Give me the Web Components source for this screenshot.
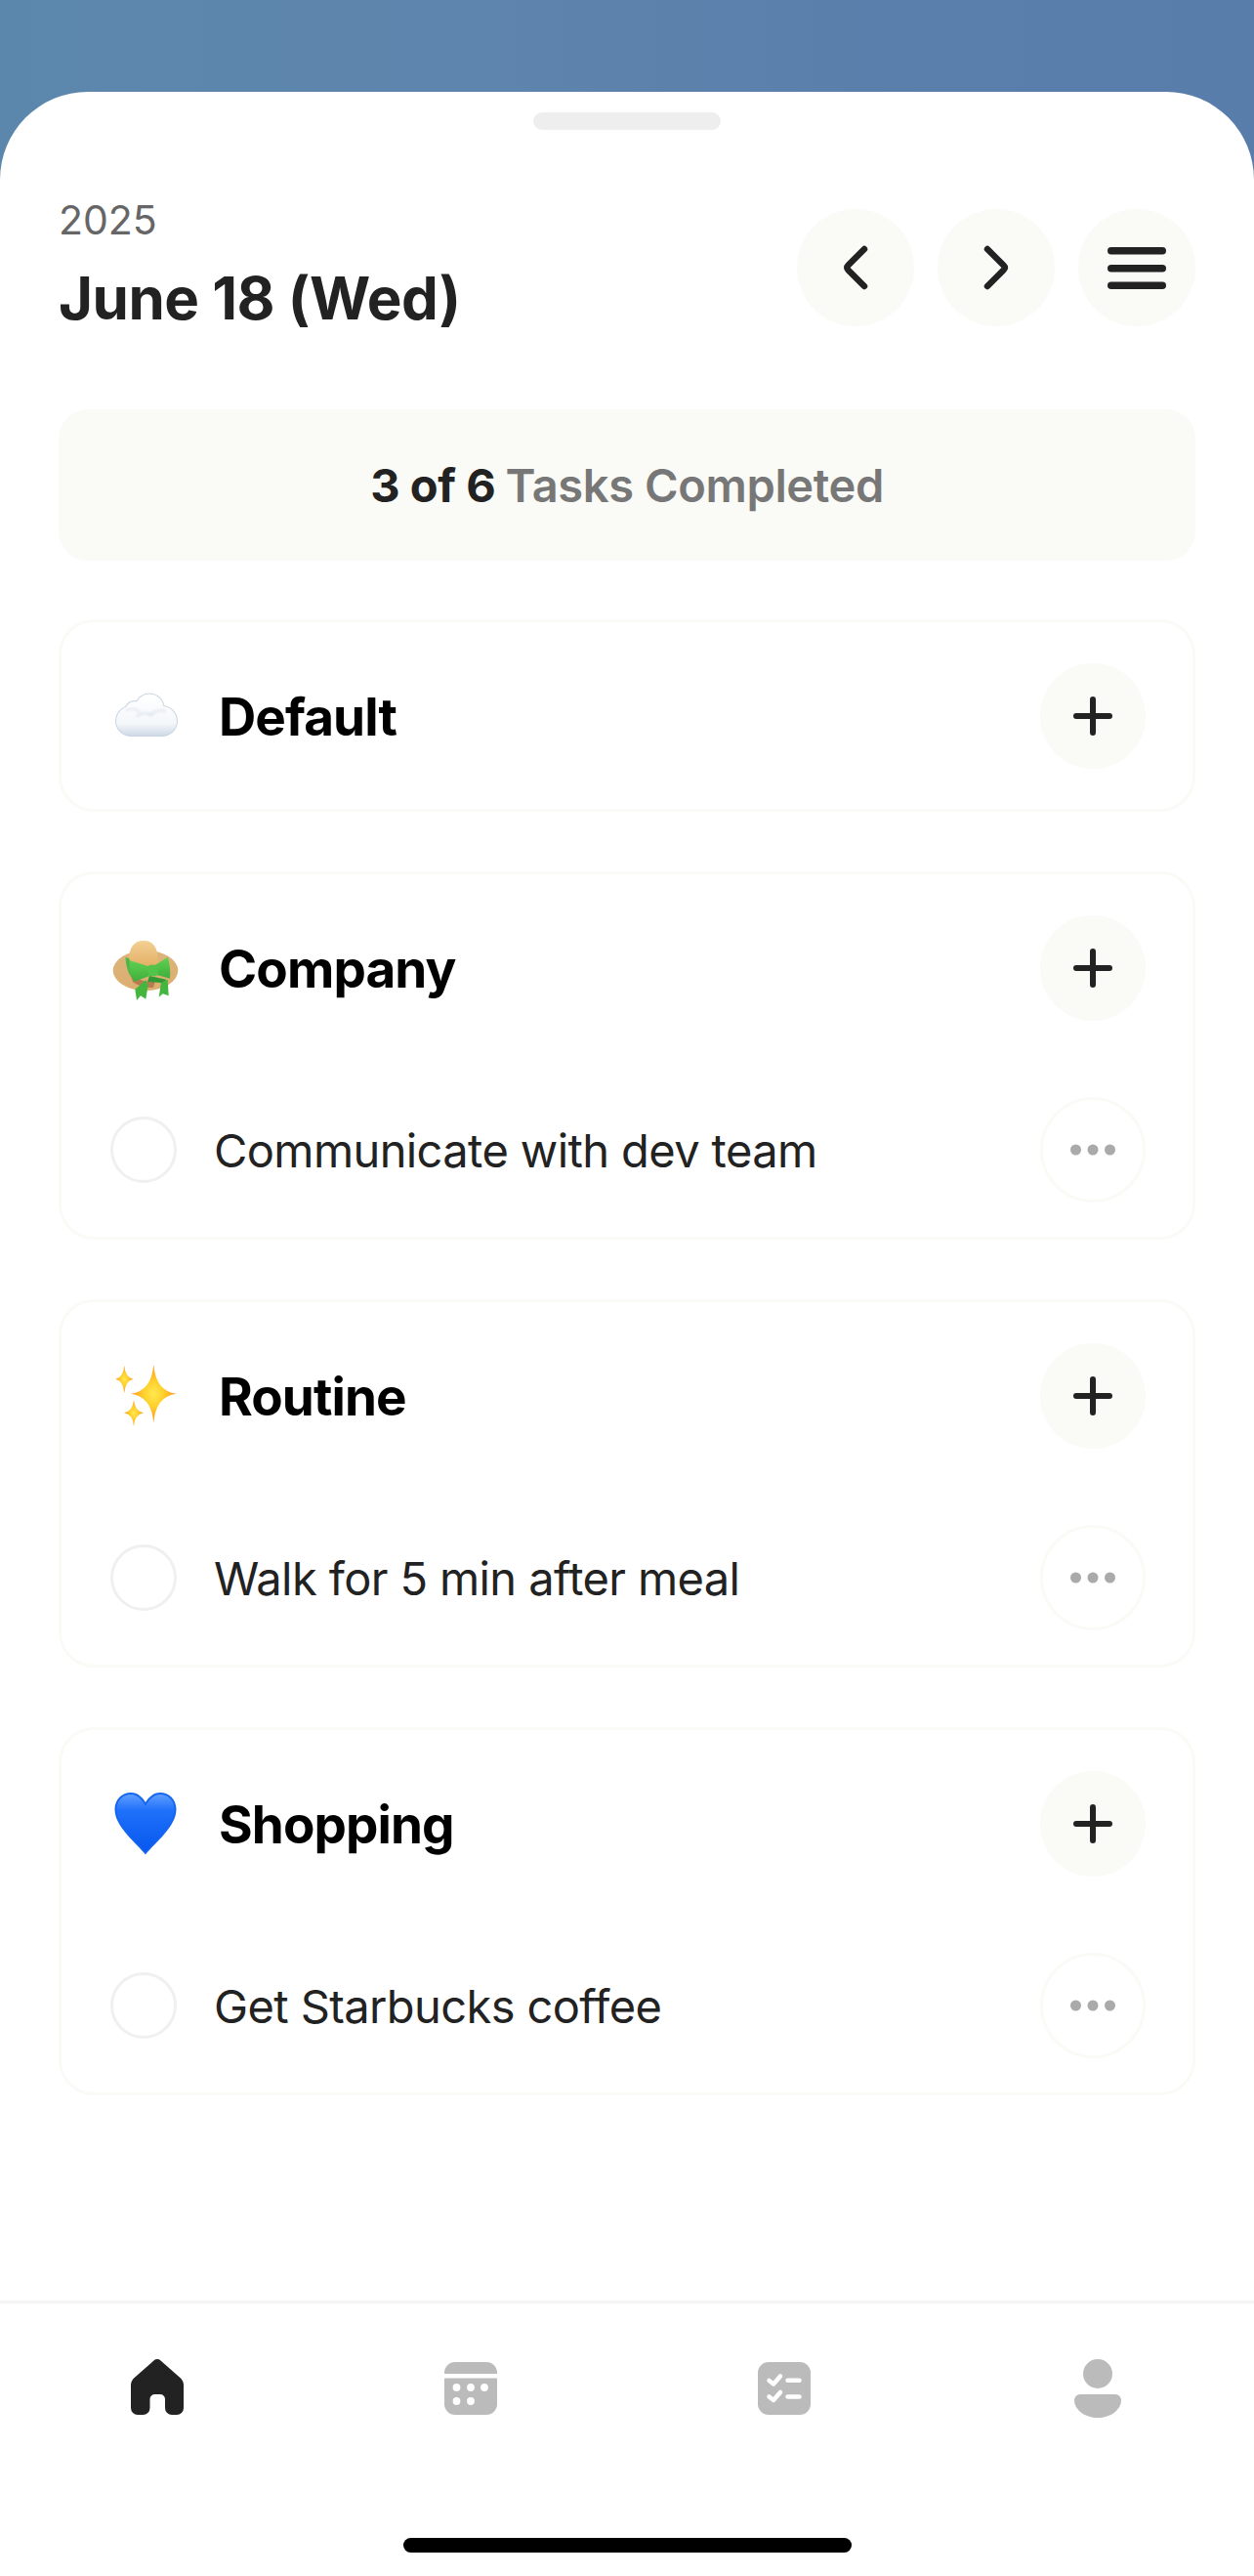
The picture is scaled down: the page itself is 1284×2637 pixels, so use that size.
<!DOCTYPE html>
<html lang="en">
<head>
<meta charset="utf-8">
<title>Tasks</title>
<style>
	html, body{margin: 0; padding: 0; background: #fff;}
	body{font-family: Inter, "Liberation Sans", sans-serif; color: #222;}
</style>
</head>
<body>
<todo-screen>
	<date-header year="2025" date="June 18 (Wed)"></date-header>
	<progress-banner done="3 of 6" label="Tasks Completed"></progress-banner>
	<category-list>
		<category-card>
			<task-emoji slot="emoji" name="cloud"></task-emoji>
			<span slot="title">Default</span>
		</category-card>
		<category-card>
			<task-emoji slot="emoji" name="hat"></task-emoji>
			<span slot="title">Company</span>
			<task-row>Communicate with dev team</task-row>
		</category-card>
		<category-card>
			<task-emoji slot="emoji" name="sparkles"></task-emoji>
			<span slot="title">Routine</span>
			<task-row>Walk for 5 min after meal</task-row>
		</category-card>
		<category-card>
			<task-emoji slot="emoji" name="heart"></task-emoji>
			<span slot="title">Shopping</span>
			<task-row>Get Starbucks coffee</task-row>
		</category-card>
	</category-list>
	<bottom-nav slot="nav"></bottom-nav>
</todo-screen>
<script>
document.head.insertAdjacentHTML('beforeend', `
<template id="todo-screen"><style>
	:host{display: flex; flex-direction: column; box-sizing: border-box; width: 1284px; height: 2637px; padding-top: 94px; overflow: hidden;
		background: linear-gradient(90deg, #5c87ad 0%, #5e85ad 38%, #5a7fab 68%, #587dab 100%);}
	#sheet{flex: 1; display: flex; flex-direction: column; background: #fff; border-radius: 90px 90px 0 0;}
	#handle{align-self: center; width: 192px; height: 18px; margin-top: 21px; border-radius: 9px; background: #eee;}
	#main{flex: 1; display: flex; flex-direction: column; padding: 81px 60px 0;}
</style>
	<div id="sheet">
		<div id="handle"></div>
		<div id="main"><slot></slot></div>
		<slot name="nav"></slot>
	</div>
</template>

<template id="round-btn"><style>
	:host{display: flex; align-items: center; justify-content: center; box-sizing: border-box; width: var(--size, 120px); height: var(--size, 120px); border-radius: 50%; background: #fafaf6; flex: none;}
	:host([outline]){background: #fff; border: 3px solid #fafaf6;}
	svg{display: block;}
</style><slot></slot></template>

<template id="date-header"><style>
	:host{display: flex; justify-content: space-between; align-items: flex-start; height: 120px;}
	#year{font-size: 41px; line-height: 48px; color: #666; margin-top: -13px;}
	#date{font-size: 60px; line-height: 72px; font-weight: 700; color: #222; letter-spacing: -0.5px; margin-top: 20px;}
	#btns{display: flex; gap: 24px;}
</style>
	<div>
		<div id="year"></div>
		<div id="date"></div>
	</div>
	<div id="btns">
		<round-btn><svg width="60" height="60" viewBox="0 0 60 60" fill="none" stroke="#222" stroke-width="6.5" stroke-linecap="round" stroke-linejoin="round"><path d="M39 11 L22.5 27.5 Q20 30 22.5 32.5 L39 49"/></svg></round-btn>
		<round-btn><svg width="60" height="60" viewBox="0 0 60 60" fill="none" stroke="#222" stroke-width="6.5" stroke-linecap="round" stroke-linejoin="round"><path d="M21 11 L37.5 27.5 Q40 30 37.5 32.5 L21 49"/></svg></round-btn>
		<round-btn><svg width="60" height="60" viewBox="0 0 60 60" fill="#222"><rect x="0" y="9" width="60" height="7.5" rx="3.75"/><rect x="0" y="27" width="60" height="7.5" rx="3.75"/><rect x="0" y="44.5" width="60" height="7.5" rx="3.75"/></svg></round-btn>
	</div>
</template>

<template id="progress-banner"><style>
	:host{display: flex; align-items: center; justify-content: center; height: 155px; margin-top: 85px; border-radius: 30px; background: #fafaf6; font-size: 47px; letter-spacing: -0.38px;}
	b{font-weight: 700; color: #222; margin-right: 10px;}
	span{font-weight: 600; color: #777;}
</style><b></b><span></span></template>

<template id="category-list"><style>
	:host{display: flex; flex-direction: column; gap: 61px; margin-top: 60px;}
</style><slot></slot></template>

<template id="category-card"><style>
	:host{display: block; box-sizing: border-box; border: 3px solid #fafaf6; border-radius: 36px; padding: 42px 48px 35px 50px; background: #fff;}
	#head{display: flex; align-items: center; padding-bottom: 6px;}
	#title{flex: 1; margin-left: 39px; padding-top: 2px; font-size: 53px; font-weight: 700; color: #000; letter-spacing: -0.9px;}
	#plus{--size: 108px;}
</style>
	<div id="head">
		<slot name="emoji"></slot>
		<div id="title"><slot name="title"></slot></div>
		<round-btn id="plus"><svg width="44" height="44" viewBox="0 0 44 44" fill="none" stroke="#222" stroke-width="6" stroke-linecap="round"><path d="M22 5 V39 M5 22 H39"/></svg></round-btn>
	</div>
	<slot></slot>
</template>

<template id="task-row"><style>
	:host{display: flex; align-items: center; margin-top: 72px; font-size: 47px; letter-spacing: -0.6px; color: #222;}
	#check{box-sizing: border-box; width: 68px; height: 68px; border: 3px solid #f0f0f0; border-radius: 50%; flex: none; margin-right: 38px;}
	#text{flex: 1;}
	#more{--size: 108px;}
</style>
	<div id="check"></div>
	<div id="text"><slot></slot></div>
	<round-btn id="more" outline=""><svg width="46" height="12" viewBox="0 0 46 12" fill="#aaa"><circle cx="5.5" cy="6" r="5.5"/><circle cx="23" cy="6" r="5.5"/><circle cx="40.5" cy="6" r="5.5"/></svg></round-btn>
</template>

<template id="task-emoji"><style>
	:host{display: block; width: 72px; height: 72px; flex: none;}
	svg{display: block;}
</style></template>

<template id="bottom-nav"><style>
	:host{display: block; border-top: 3px solid #f5f5f5; background: #fff;}
	#tabs{display: grid; grid-template-columns: repeat(4, 1fr); padding-top: 57px;}
	#tabs div{display: flex; justify-content: center; height: 60px;}
	svg{display: block;}
	#bar{width: 459px; height: 15px; margin: 123px auto 24px; border-radius: 8px; background: #000;}
</style>
	<div id="tabs">
		<div><svg width="54" height="60" viewBox="0 0 54 60" fill="#222"><path d="M23.5 1.5 a5 5 0 0 1 7 0 L51.5 20 Q54 23 54 26 V50 a7 7 0 0 1 -7 7 H42 a7 7 0 0 1 -7 -7 V41 a5 5 0 0 0 -5 -5 H24.5 a5 5 0 0 0 -5 5 V50 a7 7 0 0 1 -7 7 H7 a7 7 0 0 1 -7 -7 V26 Q0 23 2.5 20 Z"/></svg></div>
		<div><svg width="54" height="60" viewBox="0 0 54 60"><path fill="#bbb" d="M11 3 H43 a11 11 0 0 1 11 11 V46 a11 11 0 0 1 -11 11 H11 a11 11 0 0 1 -11 -11 V14 a11 11 0 0 1 11 -11 Z"/><rect y="15" width="54" height="4.5" fill="#fff"/><g fill="#fff"><circle cx="12.5" cy="29" r="3.9"/><circle cx="27" cy="29" r="3.9"/><circle cx="41" cy="29" r="3.9"/><circle cx="12.5" cy="43" r="3.9"/><circle cx="27" cy="43" r="3.9"/></g></svg></div>
		<div><svg width="54" height="60" viewBox="0 0 54 60"><rect y="3" width="54" height="54" rx="11" fill="#bbb"/><g fill="none" stroke="#fff" stroke-width="4.5" stroke-linecap="round" stroke-linejoin="round"><path d="M11.5 22 L16 25.5 L23 17.5"/><path d="M11.5 38.5 L16 42 L23 34"/><path d="M30.5 21.7 H42.5"/><path d="M30.5 38.4 H42.5"/></g></svg></div>
		<div><svg width="48" height="60" viewBox="0 0 48 60" fill="#bbb"><ellipse cx="24" cy="15" rx="15" ry="15"/><path d="M6 36 H42 a6 6 0 0 1 6 6 C48 52 37 60 24 60 C11 60 0 52 0 42 a6 6 0 0 1 6 -6 Z"/></svg></div>
	</div>
	<div id="bar"></div>
</template>
`);

const EMOJI = {
	cloud: `<defs>
		<linearGradient id="c" gradientUnits="userSpaceOnUse" x1="0" y1="14" x2="0" y2="56"><stop offset="0" stop-color="#fff"/><stop offset=".7" stop-color="#f4f7fa"/><stop offset="1" stop-color="#cfdae6"/></linearGradient>
		<filter id="s"><feGaussianBlur stdDeviation="1.6"/></filter>
	</defs>
	<g fill="#c9d5e2"><circle cx="21" cy="41" r="16"/><circle cx="53" cy="41" r="16"/><circle cx="40" cy="28" r="15.5"/><circle cx="25" cy="31" r="11"/><rect x="20" y="36" width="34" height="21" /></g>
	<g fill="url(#c)"><circle cx="21" cy="41" r="15"/><circle cx="53" cy="41" r="15"/><circle cx="40" cy="28" r="14.5"/><circle cx="25" cy="31" r="10"/><rect x="20" y="36" width="34" height="20"/></g>
	<g fill="none" stroke="#d3dde8" stroke-width="1.4" filter="url(#s)"><path d="M16 30 Q24 26 30 32"/><path d="M27 37 Q33 30 43 35"/><path d="M40 36 Q47 28 57 31"/></g>`,
	hat: `<defs>
		<linearGradient id="b" x1="0" y1="0" x2="0" y2="1"><stop offset="0" stop-color="#dcb47a"/><stop offset="1" stop-color="#dcae70"/></linearGradient>
		<linearGradient id="t" x1="0" y1="0" x2="0" y2="1"><stop offset="0" stop-color="#f3d092"/><stop offset="1" stop-color="#e2ac62"/></linearGradient>
		<linearGradient id="g" x1="0" y1="0" x2="0" y2="1"><stop offset="0" stop-color="#5fd052"/><stop offset="1" stop-color="#3fae3c"/></linearGradient>
	</defs>
	<ellipse cx="36" cy="38.5" rx="33.3" ry="20.5" fill="url(#b)"/>
	<path d="M18.7 30 C18.7 15 24 8 34 8 C44 8 49 15 49 30 V37 H18.7 Z" fill="url(#t)"/>
	<path d="M21 44 L36 50 L46 49 L44 56 C36 56 28 54 23 50 Z" fill="#b87c50"/>
	<path d="M15.5 25 C16 34 18 41 22 46 L24 36 L19 26 Z" fill="#4db748"/>
	<path d="M19.7 28.3 L42 35 V43.3 L24.3 50 Q19 40 19.7 28.3 Z" fill="url(#g)"/>
	<path d="M58.7 25 L45.3 33.3 V42.3 L61 46.7 Q62 35 58.7 25 Z" fill="url(#g)"/>
	<path d="M36.3 48.3 L25.3 57.7 L27 69 L31 64.3 L36.3 67.7 L38.7 53.3 Z" fill="#44b640"/>
	<path d="M52 50 L49.7 65.7 L53.7 62.3 L59.7 64.3 L58.7 48.3 Z" fill="#44b640"/>
	<path d="M40 44 L54 47 L58 48 L52 51 L38 50 Z" fill="#2f9a34"/>
	<rect x="38.7" y="32.7" width="10" height="11.6" rx="3" fill="#52c44a"/>`,
	sparkles: `<defs>
		<radialGradient id="y"><stop offset="0" stop-color="#ffe94f"/><stop offset=".45" stop-color="#ffcf2c"/><stop offset="1" stop-color="#ff9418"/></radialGradient>
	</defs>
	<g fill="url(#y)">
		<path d="M44.3 4 Q46.5 31 67.5 33.7 Q46.5 36.5 44.3 63.5 Q42 36.5 21 33.7 Q42 31 44.3 4 Z"/>
		<path d="M14.3 5 Q15.2 17 23.3 18.7 Q15.2 20.5 14.3 33 Q13.3 20.5 5.3 18.7 Q13.3 17 14.3 5 Z"/>
		<path d="M24 40 Q25 51.5 34 53.3 Q25 55 24 67 Q23 55 14 53.3 Q23 51.5 24 40 Z"/>
	</g>`,
	heart: `<defs>
		<linearGradient id="h" x1="0" y1="0" x2="0" y2="1"><stop offset="0" stop-color="#5f9dff"/><stop offset=".28" stop-color="#1f70fa"/><stop offset="1" stop-color="#0757ee"/></linearGradient>
	</defs>
	<path d="M36 67.5 C26 55 4.5 39 4.5 21 C4.5 11 12 4 21 4 C28 4 33 9 36 14 C39 9 44 4 51 4 C60 4 67.5 11 67.5 21 C67.5 39 46 55 36 67.5 Z" fill="#1466f0"/>
	<path d="M36 65 C27 54 6.5 38 6.5 21 C6.5 12 13 6 21 6 C28 6 33 12 36 18 C39 12 44 6 51 6 C59 6 65.5 12 65.5 21 C65.5 38 45 54 36 65 Z" fill="url(#h)"/>`
};

function define(name, setup) {
	window.customElements.define(name, class extends HTMLElement {
		constructor() {
			super();
			this.attachShadow({mode: 'open'}).appendChild(document.querySelector('#' + name).content.cloneNode(true));
		}
		connectedCallback() {
			if (setup) setup(this, this.shadowRoot);
		}
	});
}

define('todo-screen');
define('round-btn');
define('category-list');
define('category-card');
define('task-row');
define('bottom-nav');
define('date-header', (el, root) => {
	root.querySelector('#year').textContent = el.getAttribute('year');
	root.querySelector('#date').textContent = el.getAttribute('date');
});
define('progress-banner', (el, root) => {
	root.querySelector('b').textContent = el.getAttribute('done');
	root.querySelector('span').textContent = el.getAttribute('label');
});
define('task-emoji', (el, root) => {
	root.appendChild(document.createElement('div')).innerHTML = '<svg width="72" height="72" viewBox="0 0 72 72">' + EMOJI[el.getAttribute('name')] + '</svg>';
});
</script>
</body>
</html>
